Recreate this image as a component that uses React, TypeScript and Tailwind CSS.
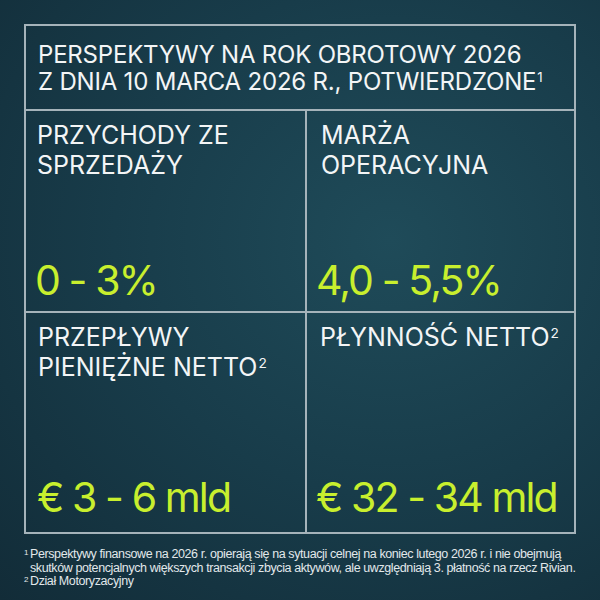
const HEAD = "font-['Inter','Liberation_Sans',sans-serif]";

function Sup({ n }: { n: string }) {
  return <span className="relative -top-[0.6em] ml-[1px] text-[0.55em]">{n}</span>;
}

function Cell({
  label,
  value,
  className,
  pl,
  pb,
  shift,
}: {
  label: React.ReactNode;
  value: React.ReactNode;
  className: string;
  pl: string;
  pb: string;
  shift: string;
}) {
  return (
    <div className={`min-w-0 flex flex-col justify-between border-[#a5b3ba] ${className} ${pl} ${pb} pt-[9px]`}>
      <div className="text-[25px] leading-[30px] text-[#f3f5f6]">{label}</div>
      <div className={`text-[41px] leading-none tracking-[-1.9px] text-[#c8ef2e] whitespace-nowrap ${shift}`}>
        {value}
      </div>
    </div>
  );
}

export default function App() {
  return (
    <div
      className={`w-[600px] h-[600px] overflow-hidden bg-[radial-gradient(ellipse_at_65%_40%,#1f4b59_0%,#183c4a_50%,#122c38_100%)] pt-[24px] px-[24px] ${HEAD}`}
    >
      <div className="h-[510px] border-2 border-[#a5b3ba] flex flex-col">
        <div className="h-[85px] shrink-0 border-b-2 border-[#a5b3ba] pl-[12px] pt-[15px] text-[24px] leading-[27px] tracking-[-0.2px] text-[#f3f5f6]">
          PERSPEKTYWY NA ROK OBROTOWY 2026
          <br />Z DNIA 10 MARCA 2026 R., POTWIERDZONE
          <Sup n="1" />
        </div>
        <div className="grid grid-cols-[281px_minmax(0,1fr)] grid-rows-[202px_minmax(0,1fr)] flex-1">
          <Cell
            className="border-r-2 border-b-2"
            pl="pl-[11px]"
            pb="pb-[10px]"
            shift="-ml-[2px]"
            label={
              <>
                PRZYCHODY ZE
                <br />
                SPRZEDAŻY
              </>
            }
            value="0 - 3%"
          />
          <Cell
            className="border-b-2"
            pl="pl-[14px]"
            pb="pb-[10px]"
            shift="-ml-[5px]"
            label={
              <>
                MARŻA
                <br />
                OPERACYJNA
              </>
            }
            value="4,0 - 5,5%"
          />
          <Cell
            className="border-r-2"
            pl="pl-[12px]"
            pb="pb-[14px]"
            shift="-ml-[1px]"
            label={
              <>
                PRZEPŁYWY
                <br />
                PIENIĘŻNE NETTO
                <Sup n="2" />
              </>
            }
            value="€ 3 - 6 mld"
          />
          <Cell
            className=""
            pl="pl-[13px]"
            pb="pb-[14px]"
            shift="-ml-[4px]"
            label={
              <>
                PŁYNNOŚĆ NETTO
                <Sup n="2" />
              </>
            }
            value="€ 32 - 34 mld"
          />
        </div>
      </div>
      <div className="mt-[14px] font-['Liberation_Sans',sans-serif] text-[12.5px] leading-[13.5px] tracking-[-0.4px] text-[#e2e8eb] whitespace-nowrap">
        <div className="flex">
          <span className="w-[6px] text-[8px] leading-[10px] shrink-0">1</span>
          <span>
            Perspektywy finansowe na 2026 r. opierają się na sytuacji celnej na koniec lutego 2026 r. i nie obejmują
            <br />
            skutków potencjalnych większych transakcji zbycia aktywów, ale uwzględniają 3. płatność na rzecz Rivian.
          </span>
        </div>
        <div className="flex">
          <span className="w-[6px] text-[8px] leading-[10px] shrink-0">2</span>
          <span>Dział Motoryzacyjny</span>
        </div>
      </div>
    </div>
  );
}
